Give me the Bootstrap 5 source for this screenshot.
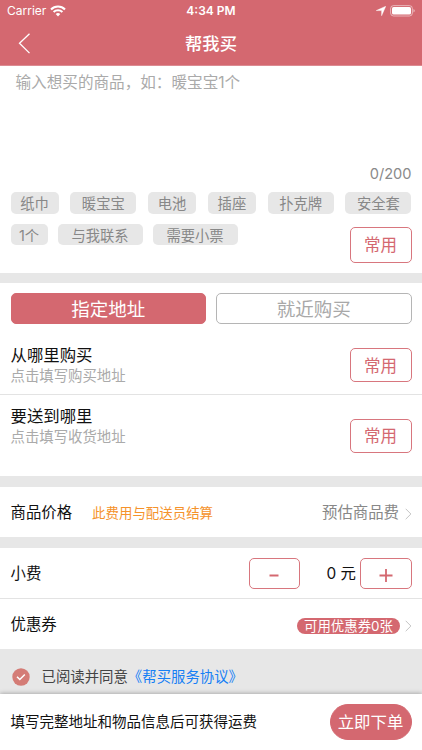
<!DOCTYPE html>
<html lang="zh-CN">
<head>
<meta charset="utf-8">
<meta name="viewport" content="width=device-width, initial-scale=1">
<title>帮我买</title>
<link href="https://cdn.jsdelivr.net/npm/bootstrap@5.3.0/dist/css/bootstrap.min.css" rel="stylesheet">
<style>
:root{--rose:#d46870;--gap:#e7e7e7}
body{font-family:Inter,"Noto Sans CJK SC",sans-serif;font-size:15.4px;line-height:1.3;color:#111;height:750px;overflow:hidden;background:var(--gap)}
.app{height:750px}
.top-area{background:var(--rose);height:66px;border-bottom:1px solid #dc8b92}
.status{height:22px;padding:0 7px;font-size:12px}
.status>div{flex:1 1 0}
.title-row{height:43px;padding:0 18px}
.title-row>div{width:30px}
.title-row h1{font-size:17.3px;font-weight:500;line-height:22px}
.btn{--bs-btn-padding-x:0;--bs-btn-padding-y:0;--bs-btn-border-radius:5px;--bs-btn-line-height:1;display:flex;align-items:center;justify-content:center}
.btn-rose{--bs-btn-color:var(--rose);--bs-btn-border-color:#d8767e;--bs-btn-font-size:16.5px;width:62px;height:34px;padding-top:2px}
.btn-full{--bs-btn-color:#fff;--bs-btn-bg:var(--rose);--bs-btn-border-color:var(--rose)}
.btn-gray{--bs-btn-color:#a8a8a8;--bs-btn-border-color:#b5b5b5}
.seg-row{gap:10px;padding:0 10.5px}
.seg-row .btn{flex-basis:0;padding-top:2px}
.seg{height:31px;--bs-btn-font-size:18.5px}
.want{height:207px;padding:7px 10.5px 0}
.want .btn{height:36px;margin-top:3px}
.hint{height:91px;padding-left:5px;color:#aaa;font-size:15.6px;line-height:20px}
.count{color:#8a8a8a;height:20px;line-height:20px;font-size:14.6px;margin-bottom:8px}
.more-chips{gap:10px;margin-top:10px}
.chip{background:var(--gap);color:#888;border-radius:5px;height:21.5px;font-size:14.3px;line-height:23px;text-align:center}
.w37{width:37px}.w47{width:48px}.w66{width:66px}.w85{width:85px}
.place{height:193px;margin-top:10px;padding-top:10px}
.where{height:71px;padding:12px 10.5px 0}
.where-to{height:81px;padding:0 10.5px}
.to-text{padding-top:11px}
.where-name{font-size:16.4px;line-height:21px}
.where-hint{font-size:14.4px;line-height:20px;color:#aaa}
.line-row{height:50px;padding:3px 10px 0 10.5px}
.rule{border-bottom:1px solid #e3e3e3}
.tip{height:51px;padding:1px 10.5px 0}
.tip-name{padding-top:2px}
.mt-gap{margin-top:11px}
.note{font-size:13.45px;color:#f5922b;margin-left:20px}
.muted{color:#888}
.arrow{margin-left:6px}
.step{width:51.5px;height:31px}
.amount{width:56px;padding-top:2px}
.coupon{background:var(--rose);color:#fff;height:16px;width:103px;font-size:13.4px;line-height:16px;text-align:center}
.coupon-arrow{margin-left:5px}
.agree{height:45px;padding:11px 11.5px 0;font-size:14.4px;color:#444}
.agree a{color:#1680f5}
.check-dot{margin-right:12px}
.order{height:56px;padding:0 10.5px;font-size:14.5px;box-shadow:0 -1px 4px rgba(0,0,0,.25)}
.order .btn{width:82px;height:36px;--bs-btn-font-size:16.4px;--bs-btn-border-radius:18px}
</style>
<script src="https://cdn.jsdelivr.net/npm/bootstrap@5.3.0/dist/js/bootstrap.bundle.min.js"></script>
</head>
<body>
<div class="app d-flex flex-column">
  <header class="top-area text-white flex-shrink-0">
    <div class="status d-flex align-items-center">
      <div class="d-flex align-items-center gap-1"><span>Carrier</span>
        <svg width="16" height="12" viewBox="0 0 16 12" fill="none" stroke="#fff" stroke-width="2.1"><path d="M1 4.4a10 10 0 0 1 14 0M3.6 7a6.3 6.3 0 0 1 8.8 0"/><path d="M8 11.5 5.7 9.1a3.3 3.3 0 0 1 4.6 0z" fill="#fff" stroke="none"/></svg>
      </div>
      <span class="fw-semibold">4:34 PM</span>
      <div class="d-flex align-items-center justify-content-end gap-1">
        <svg width="10" height="10" viewBox="0 0 10 10"><path d="M9.8.2 5.6 9.8V4.6H.2z" fill="#fff" stroke="#fff" stroke-width=".4"/></svg>
        <svg width="25" height="12" viewBox="0 0 25 12"><rect x=".6" y=".6" width="21.8" height="10.4" rx="3" fill="none" stroke="#fff" stroke-opacity=".5"/><rect x="2" y="2" width="19" height="7.6" rx="1.6" fill="#fff"/><path d="M23.5 4v3.5q1.2-.4 1.2-1.75T23.5 4" fill="#fff" fill-opacity=".6"/></svg>
      </div>
    </div>
    <div class="title-row d-flex align-items-center justify-content-between">
      <div><svg class="d-block" width="13" height="21" viewBox="0 0 13 21" fill="none" stroke="#fff" stroke-width="1.3"><path d="M11.5.7 1.5 10.3l10 9.8"/></svg></div>
      <h1 class="m-0">帮我买</h1><div></div>
    </div>
  </header>

  <section class="want bg-white flex-shrink-0">
    <div class="hint">输入想买的商品，如：暖宝宝1个</div>
    <div class="count text-end">0/200</div>
    <div class="d-flex justify-content-between">
      <span class="chip w47">纸巾</span><span class="chip w66">暖宝宝</span><span class="chip w47">电池</span><span class="chip w47">插座</span><span class="chip w66">扑克牌</span><span class="chip w66">安全套</span>
    </div>
    <div class="more-chips d-flex">
      <span class="chip w37">1个</span><span class="chip w85">与我联系</span><span class="chip w85">需要小票</span>
      <button class="btn btn-rose ms-auto">常用</button>
    </div>
  </section>

  <section class="place bg-white flex-shrink-0">
    <div class="d-flex seg-row">
      <button class="btn btn-full seg flex-fill">指定地址</button>
      <button class="btn btn-gray seg flex-fill">就近购买</button>
    </div>
    <div class="where rule d-flex align-items-center justify-content-between">
      <div><div class="where-name">从哪里购买</div><div class="where-hint">点击填写购买地址</div></div>
      <button class="btn btn-rose">常用</button>
    </div>
    <div class="where-to d-flex align-items-center justify-content-between">
      <div class="align-self-start to-text"><div class="where-name">要送到哪里</div><div class="where-hint">点击填写收货地址</div></div>
      <button class="btn btn-rose">常用</button>
    </div>
  </section>

  <section class="line-row mt-gap bg-white d-flex align-items-center flex-shrink-0">
    <span>商品价格</span><span class="note">此费用与配送员结算</span>
    <span class="muted ms-auto">预估商品费</span>
    <svg class="arrow" width="7" height="12" viewBox="0 0 7 12" fill="none" stroke="#c4c4c4"><path d="m.7.8 5.2 5.2-5.2 5.2"/></svg>
  </section>

  <section class="mt-gap bg-white flex-shrink-0">
    <div class="line-row rule d-flex align-items-center tip">
      <span class="tip-name">小费</span>
      <button class="btn btn-rose step ms-auto" aria-label="减"><svg width="12" height="14" viewBox="0 0 12 14"><path d="M1.5 7.5h9" stroke="#d46870" stroke-width="2"/></svg></button>
      <span class="amount text-end">0 元</span>
      <button class="btn btn-rose step ms-1" aria-label="加"><svg width="14" height="14" viewBox="0 0 14 14"><path d="M.5 7.5h13M7 1v13" stroke="#d46870" stroke-width="1.8"/></svg></button>
    </div>
    <div class="line-row d-flex align-items-center">
      <span>优惠券</span><span class="coupon rounded-pill ms-auto">可用优惠券0张</span>
      <svg class="coupon-arrow" width="7" height="12" viewBox="0 0 7 12" fill="none" stroke="#c4c4c4"><path d="m.7.8 5.2 5.2-5.2 5.2"/></svg>
    </div>
  </section>

  <div class="agree d-flex align-items-center flex-shrink-0">
    <svg class="check-dot" width="18" height="18" viewBox="0 0 18 18"><circle cx="9" cy="9" r="8.7" fill="#d47c76"/><path d="m5 8.7 2.8 2.8 5-5" fill="none" stroke="#fff" stroke-width="1.5"/></svg>
    <span>已阅读并同意<a href="#" class="text-decoration-none">《帮买服务协议》</a></span>
  </div>
  <footer class="order bg-white d-flex align-items-center justify-content-between flex-shrink-0">
    <span>填写完整地址和物品信息后可获得运费</span>
    <button class="btn btn-full">立即下单</button>
  </footer>
</div>
</body>
</html>
